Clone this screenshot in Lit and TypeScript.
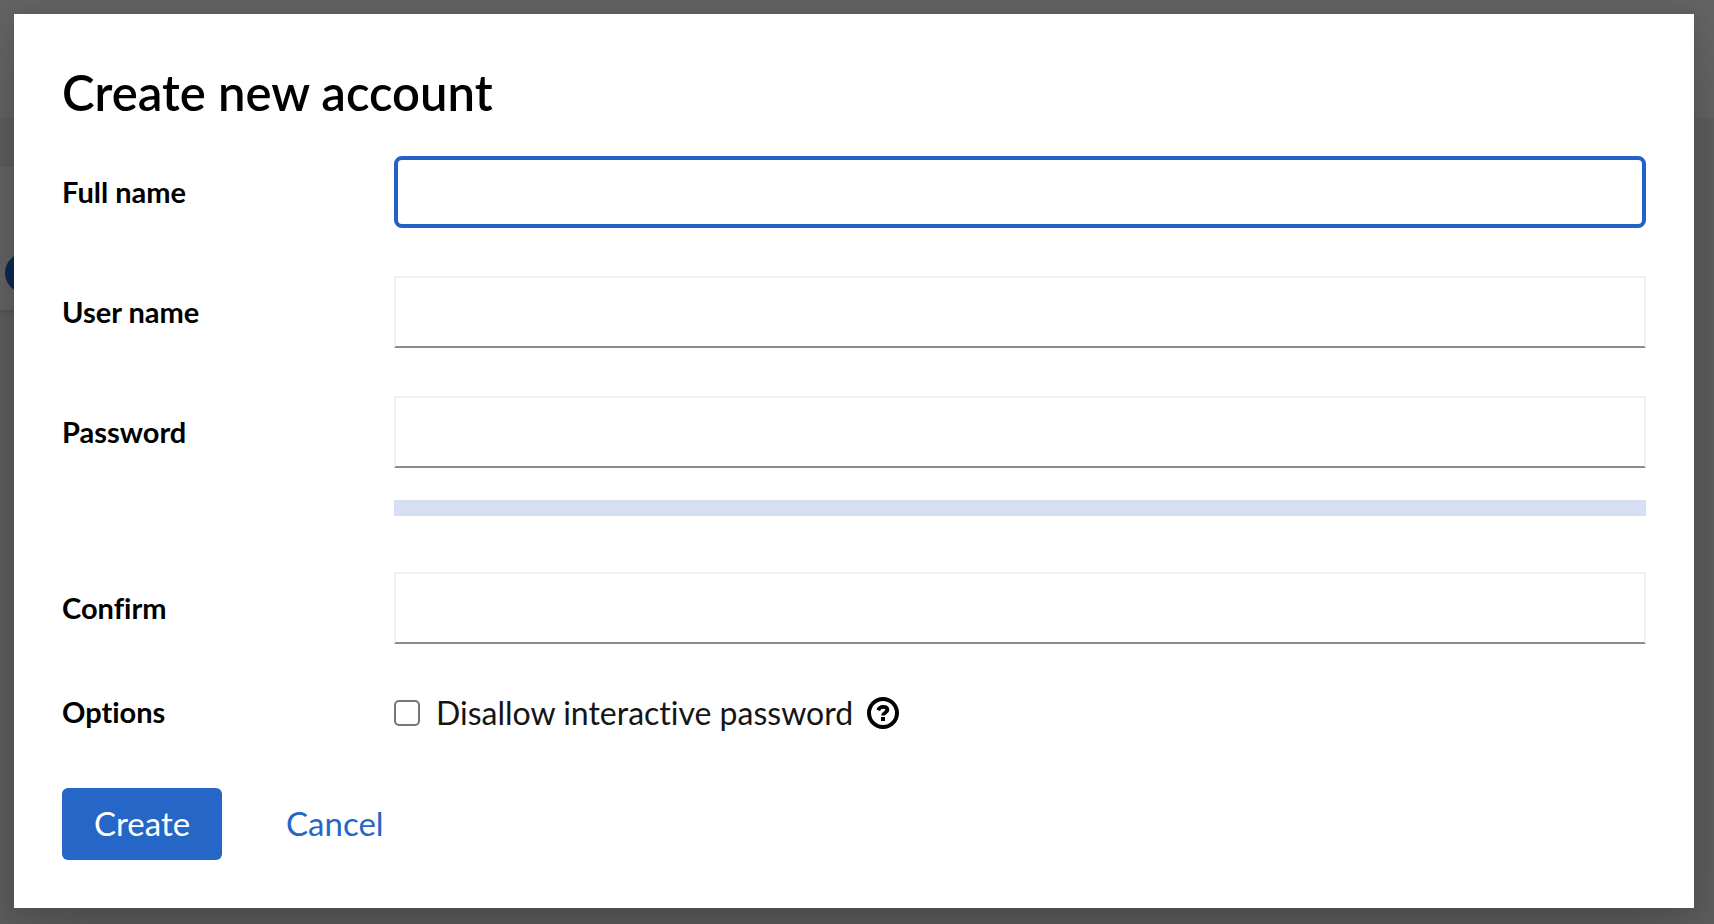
import { LitElement, html, css } from "lit";
import { customElement, state } from "lit/decorators.js";
import { classMap } from "lit/directives/class-map.js";

@customElement("app-root")
class AppRoot extends LitElement {
  static styles = css`
    :host {
      display: grid;
      min-height: 100vh;
      font-family: Lato, sans-serif;
      font-size: 32px;
      font-variant-ligatures: none;
      color: #151515;
    }
    * {
      box-sizing: border-box;
    }
    .page,
    .backdrop {
      grid-area: 1 / 1;
      min-width: 0;
    }
    .page {
      background: #f0f0f0;
    }
    .masthead {
      height: 118px;
      margin-bottom: 48px;
      background: #fff;
    }
    .card {
      width: 50%;
      height: 144px;
      padding: 87px 5px 0;
      background: #fff;
      box-shadow: 0 2px 4px rgba(3, 3, 3, 0.12), 0 0 4px rgba(3, 3, 3, 0.06);
    }
    .avatar {
      width: 40px;
      height: 40px;
      border-radius: 50%;
      background: #2468d4;
    }
    .backdrop {
      z-index: 1;
      padding: 14px 20px 16px 14px;
      background: rgba(3, 3, 3, 0.62);
    }
    .modal {
      padding: 48px;
      background: #fff;
      box-shadow: 0 32px 64px rgba(3, 3, 3, 0.16), 0 0 16px rgba(3, 3, 3, 0.1);
    }
    h1 {
      margin: 0 0 34px;
      font-size: 49px;
      font-weight: 600;
      line-height: 60px;
      color: #000;
    }
    .form {
      display: grid;
      gap: 48px;
    }
    .row {
      display: grid;
      grid-template-columns: 300px minmax(0, 1fr);
      column-gap: 32px;
    }
    .name {
      font-size: 29px;
      font-weight: 700;
      line-height: 72px;
      color: #000;
    }
    .control {
      display: grid;
      gap: 32px;
    }
    .metered {
      padding-bottom: 8px;
    }
    .field {
      width: 100%;
      height: 72px;
      padding: 0 16px;
      border: 2px solid #f0f0f0;
      border-bottom-color: #8a8d90;
      border-radius: 0;
      outline: none;
      background: #fff;
      font: inherit;
      color: inherit;
    }
    .field.active {
      border: 4px solid #2161c8;
      border-radius: 8px;
    }
    .meter {
      height: 16px;
      background: #d5dff1;
    }
    .options .name {
      line-height: 40px;
    }
    .option {
      display: flex;
      align-items: center;
      line-height: 42px;
    }
    .check {
      appearance: none;
      width: 26px;
      height: 26px;
      margin: 0 16px 0 0;
      border: 2px solid #767676;
      border-radius: 5px;
      background: #fff;
    }
    .check:checked {
      border-color: #2566c6;
      background: #2566c6;
    }
    .help {
      display: flex;
      margin-left: 14px;
      padding: 0;
      border: 0;
      background: none;
      color: #000;
    }
    .actions {
      display: flex;
      gap: 32px;
      margin-top: 54px;
    }
    .button {
      height: 72px;
      padding: 0 32px 2px;
      border: 0;
      border-radius: 6px;
      background: none;
      font-family: inherit;
      font-size: 33px;
      color: #2566c6;
    }
    .primary {
      background: #2566c6;
      color: #fff;
    }
  `;

  @state() private active = "full-name";

  private row(id: string, label: string, type = "text", metered = false) {
    return html`
      <div class="row">
        <label class="name" for=${id}>${label}</label>
        <div class=${classMap({ control: true, metered })}>
          <input
            id=${id}
            type=${type}
            class=${classMap({ field: true, active: this.active === id })}
            @focus=${() => (this.active = id)}
            @blur=${() => (this.active = "")}
          />
          ${metered ? html`<div class="meter" role="progressbar" aria-label="Password quality" aria-valuenow="0"></div>` : null}
        </div>
      </div>
    `;
  }

  render() {
    return html`
      <div class="page" aria-hidden="true">
        <div class="masthead"></div>
        <div class="card"><div class="avatar"></div></div>
      </div>
      <div class="backdrop">
        <form class="modal" role="dialog" aria-labelledby="title" @submit=${(e: Event) => e.preventDefault()}>
          <h1 id="title">Create new account</h1>
          <div class="form">
            ${this.row("full-name", "Full name")}
            ${this.row("user-name", "User name")}
            ${this.row("password", "Password", "password", true)}
            ${this.row("confirm", "Confirm", "password")}
            <div class="row options" role="group" aria-labelledby="options">
              <span class="name" id="options">Options</span>
              <div class="option">
                <input class="check" type="checkbox" id="disallow" />
                <label for="disallow">Disallow interactive password</label>
                <button class="help" type="button" aria-label="Help">
                  <svg width="32" height="32" viewBox="0 0 32 32" fill="none" stroke="currentColor">
                    <circle cx="16" cy="16" r="14" stroke-width="4" />
                    <path d="M11.2 13.2C12.2 10.8 13.7 9.8 16 9.8C18.6 9.8 20.4 11 20.4 13C20.4 15.8 16 15.4 16 18.6" stroke-width="3.8" />
                    <rect x="14" y="20" width="4" height="4" fill="currentColor" stroke="none" />
                  </svg>
                </button>
              </div>
            </div>
          </div>
          <div class="actions">
            <button class="button primary" type="submit">Create</button>
            <button class="button" type="button">Cancel</button>
          </div>
        </form>
      </div>
    `;
  }
}
